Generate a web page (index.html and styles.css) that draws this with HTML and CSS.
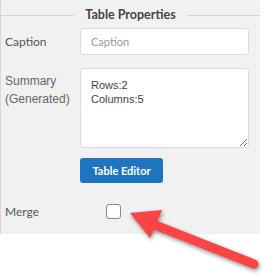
FILE: index.html
```html
<!DOCTYPE html>
<html lang="en">

<head>
    <meta charset="UTF-8">
    <meta name="viewport" content="width=device-width, initial-scale=1.0">
    <title>Table Properties</title>
    <link rel="stylesheet" href="styles.css">
</head>

<body>
    <!-- Properties panel -->
    <div class="panel">
        <div class="panel-title"><span>Table Properties</span></div>

        <div class="row">
            <label class="label" for="caption">Caption</label>
            <input class="input" id="caption" type="text" placeholder="Caption">
        </div>

        <div class="row row-summary">
            <label class="label label-multi" for="summary">Summary<br>(Generated)</label>
            <textarea class="textarea" id="summary">Rows:2
Columns:5</textarea>
        </div>

        <div class="row row-button">
            <span class="label"></span>
            <button class="btn" type="button">Table Editor</button>
        </div>

        <div class="row row-merge">
            <label class="label label-merge">Merge</label>
            <span class="checkbox"></span>
        </div>
    </div>

    <!-- Annotation arrow -->
    <svg class="arrow" width="265" height="276" viewBox="0 0 265 276">
        <g class="arrow-shape">
            <line x1="150" y1="223" x2="254" y2="264" stroke="#fc4444" stroke-width="9" stroke-linecap="round" />
            <polygon points="130,213 162,210 150,238" fill="#fc4444" />
        </g>
    </svg>
</body>

</html>
```

FILE: styles.css
```css
body {
    margin: 0;
    font-family: 'Lato', 'Liberation Sans', sans-serif;
    background-color: #fff;
    position: relative;
    width: 265px;
    height: 276px;
    overflow: hidden;
}

.panel {
    width: 259px;
    background: #f1f1f1;
    border-left: 1px solid #d8d8d8;
    padding-bottom: 15px;
}

.panel-title {
    display: flex;
    align-items: center;
    padding: 6px 0 3px;
    line-height: 18px;
    font-size: 12.5px;
    font-weight: bold;
    color: #444;
}

.panel-title::before,
.panel-title::after {
    content: '';
    flex: 1;
    height: 1px;
    background: #d4d4d4;
}

.panel-title span {
    margin: 0 11px;
}

.row {
    display: flex;
    align-items: center;
    margin-top: 1px;
    padding-right: 10px;
}

.label {
    width: 75px;
    padding-left: 4px;
    flex-shrink: 0;
    font-size: 12px;
    color: #555;
}

.input {
    box-sizing: border-box;
    width: 169px;
    height: 27px;
    margin: 0;
    padding: 0 10px;
    border: 1px solid #dcdcdc;
    border-radius: 3px;
    background: #fff;
    font-family: 'Lato', sans-serif;
    font-size: 11px;
    outline: none;
}

.input::placeholder {
    color: #999;
}

.row-summary {
    align-items: flex-start;
    margin-top: 13px;
}

.label-multi {
    padding-top: 4px;
    line-height: 18px;
    font-family: 'Liberation Sans', Arial, sans-serif;
    color: #666;
}

.textarea {
    box-sizing: border-box;
    width: 169px;
    height: 80px;
    margin: 0;
    padding: 9px 10px;
    border: 1px solid #dcdcdc;
    border-radius: 3px;
    background: #fff;
    font-family: 'Liberation Sans', Arial, sans-serif;
    font-size: 11px;
    line-height: 14px;
    color: #444;
    resize: vertical;
}

.row-button {
    margin-top: 10px;
}

.btn {
    width: 83px;
    height: 25px;
    padding: 0;
    border: none;
    border-radius: 3px;
    background: #1f74bf;
    color: #fff;
    font-family: 'Lato', sans-serif;
    font-size: 11px;
    font-weight: bold;
    cursor: pointer;
}

.row-merge {
    margin-top: 21px;
}

.label-merge {
    line-height: 15px;
}

.checkbox {
    box-sizing: border-box;
    width: 15px;
    height: 15px;
    margin-left: 26px;
    border: 1px solid #8a8a8a;
    border-radius: 3px;
    background: #fff;
}

.arrow {
    position: absolute;
    top: 0;
    left: 0;
}

.arrow-shape {
    filter: drop-shadow(1px 2px 2px rgba(0, 0, 0, 0.45));
}
```
